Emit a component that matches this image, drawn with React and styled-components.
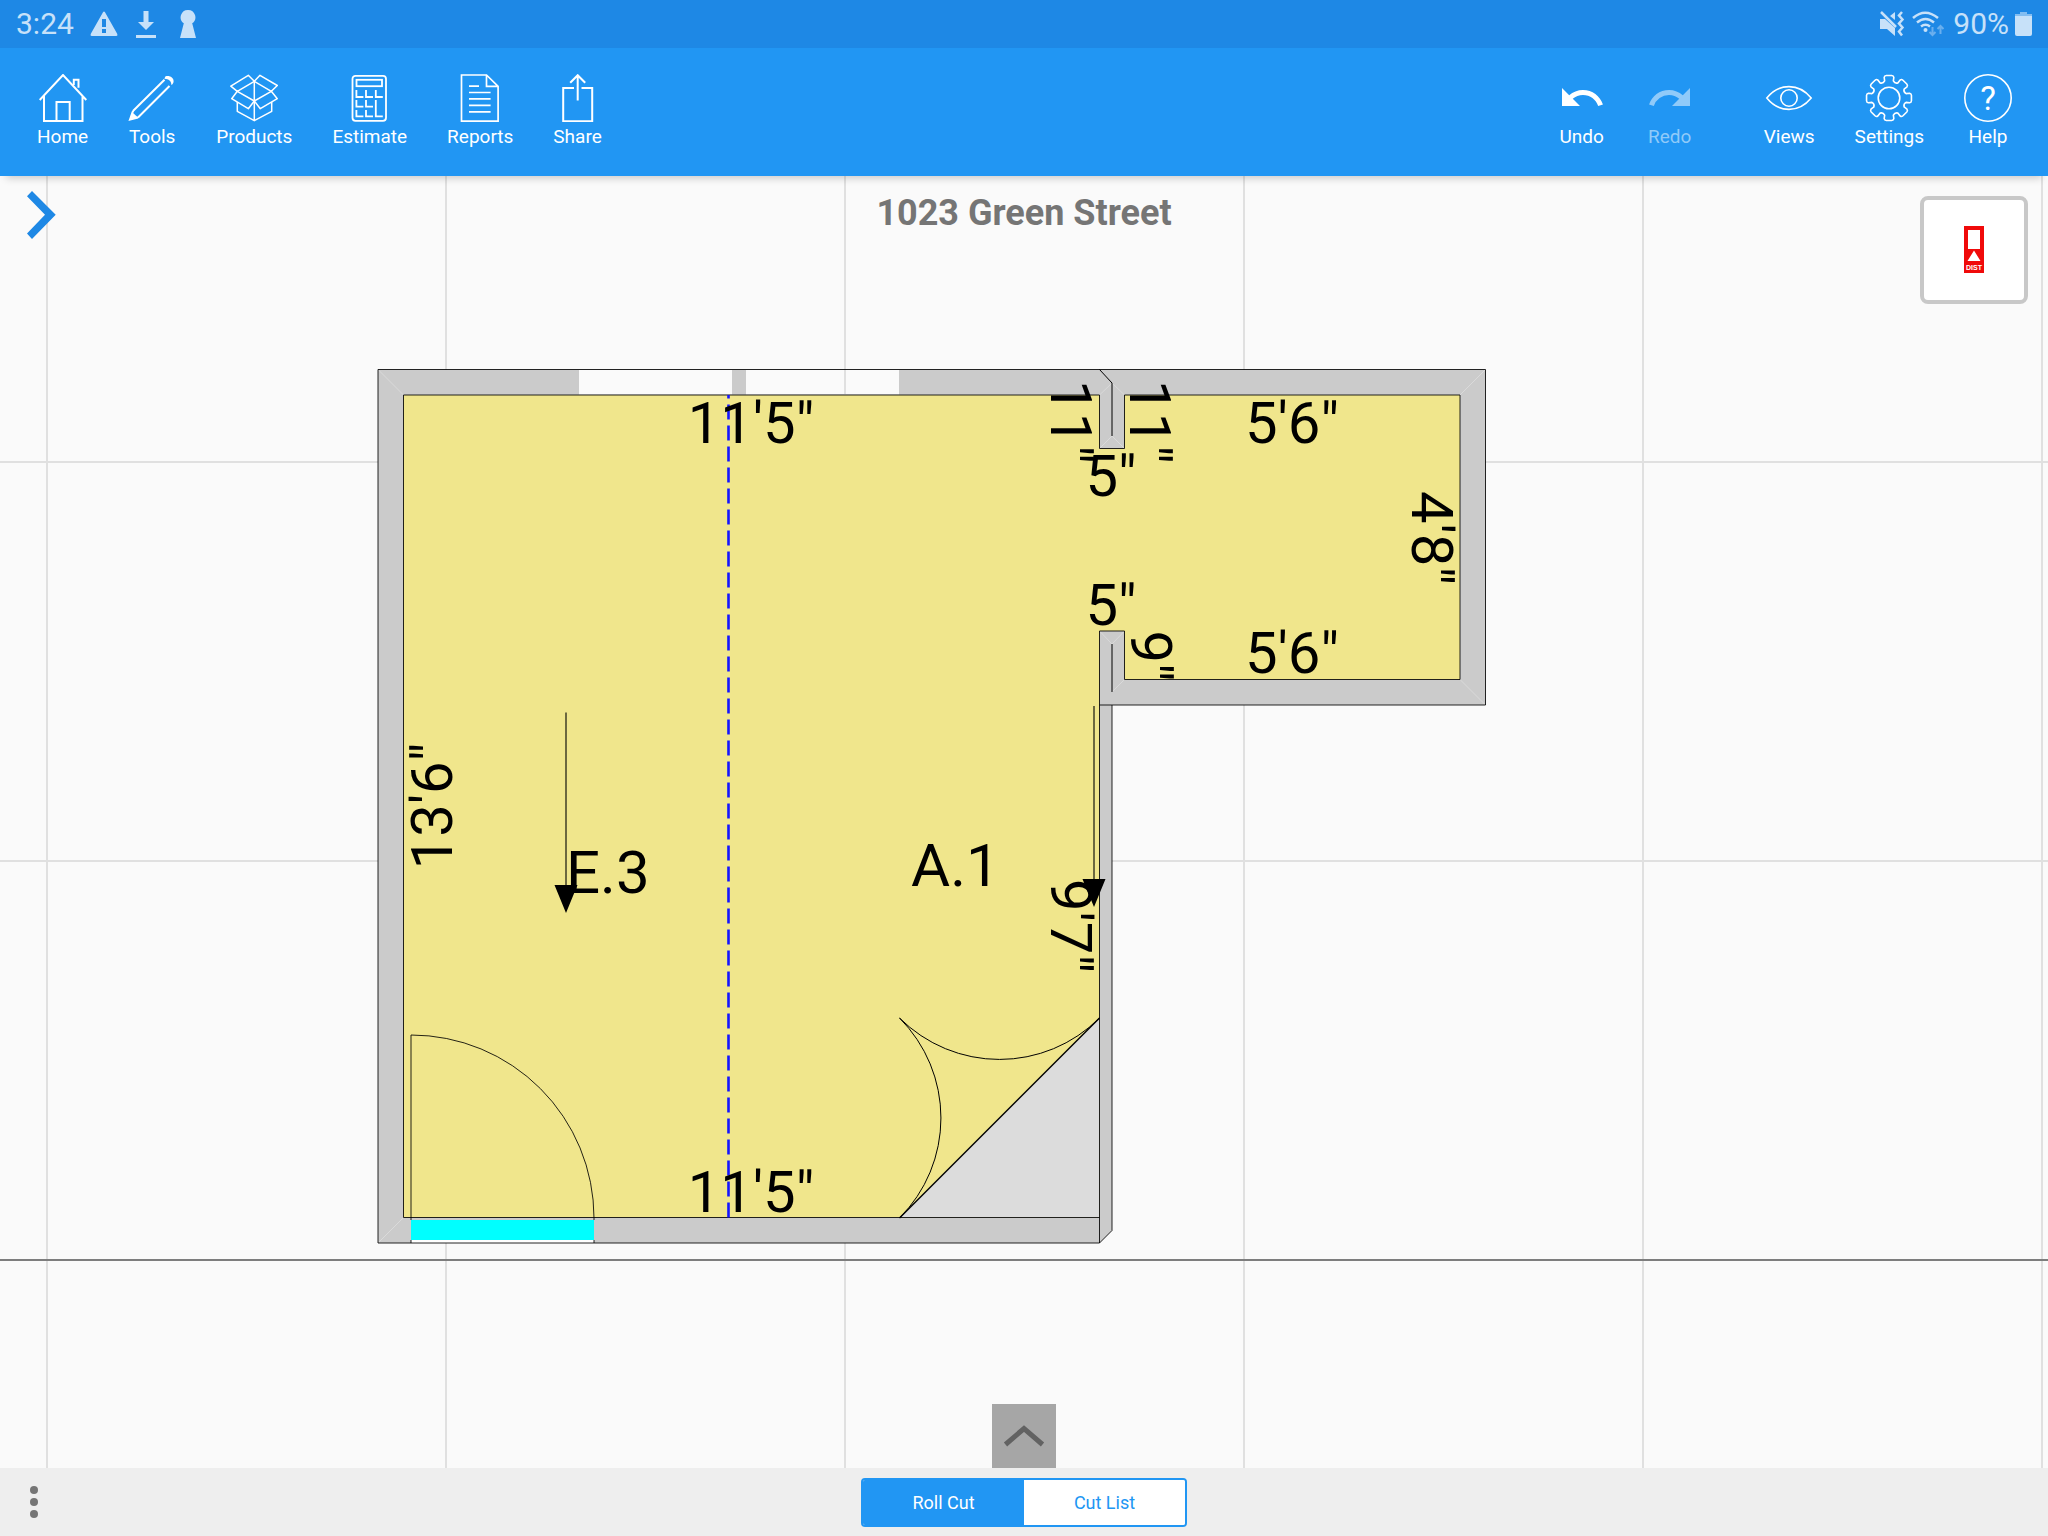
import React, { useState } from 'react'
import styled, { createGlobalStyle } from 'styled-components'
import { MdUndo, MdRedo } from 'react-icons/md'

const GlobalStyle = createGlobalStyle`
    * {
        box-sizing: border-box;
    }

    body {
        margin: 0;
        font-family: Roboto, "Liberation Sans", sans-serif;
        background: #fafafa;
    }

    button {
        margin: 0;
        padding: 0;
        border: 0;
        background: none;
        color: inherit;
        font: inherit;
        cursor: pointer;
    }

    svg {
        display: block;
    }
`

const Page = styled.div`
    display: flex;
    flex-direction: column;
    min-height: 100vh;
`

/* status bar */

const StatusBar = styled.div`
    display: flex;
    justify-content: space-between;
    align-items: center;
    height: 48px;
    padding: 0 16px;
    background: #1e88e5;
    color: #c7e1f9;
    font-size: 30px;
    line-height: 48px;
`

const StatusGroup = styled.div`
    display: flex;
    align-items: center;
    gap: ${props => props.$gap}px;
`

/* toolbar */

const Toolbar = styled.header`
    position: relative;
    z-index: 1;
    display: flex;
    justify-content: space-between;
    height: 128px;
    padding: 26px 16px 0 17px;
    background: #2196f3;
    color: #fff;
    box-shadow: 0 8px 8px -6px rgba(0, 0, 0, 0.2);
`

const ToolGroup = styled.nav`
    display: flex;
    align-items: flex-start;
`

const ToolGap = styled.div`
    width: 30px;
`

const ToolButton = styled.button`
    display: flex;
    flex-direction: column;
    align-items: center;
    gap: 3px;
    padding: 0 20px;
    font-size: 19px;
    line-height: 24px;

    &:disabled {
        color: #90caf9;
        cursor: default;
    }
`

const Icon = styled.svg`
    width: 48px;
    height: 48px;
    fill: none;
    stroke: currentColor;
    stroke-width: ${props => props.$weight || 2};
`

/* drawing area */

const Workspace = styled.main`
    position: relative;
    flex: 1;
    display: flex;
    flex-direction: column;
    align-items: center;
    justify-content: space-between;
`

const Plan = styled.svg`
    position: absolute;
    top: 0;
    left: 0;
    width: 100%;
    height: 100%;
`

const WorkspaceTop = styled.div`
    position: relative;
    width: 100%;
    display: grid;
    grid-template-columns: 1fr auto 1fr;
    align-items: start;
    padding: 15px 20px 0;
`

const PanelToggle = styled.button`
    justify-self: start;
    padding: 0 7px;
`

const Title = styled.h1`
    margin: 0;
    color: #757575;
    font-size: 36px;
    font-weight: 700;
    line-height: 44px;
`

const DeviceButton = styled.button`
    justify-self: end;
    display: flex;
    align-items: center;
    justify-content: center;
    width: 108px;
    height: 108px;
    margin-top: 5px;
    background: #fff;
    border: 4px solid #c8c8c8;
    border-radius: 8px;
`

const DrawerButton = styled.button`
    position: relative;
    width: 64px;
    height: 64px;
    background: #a6a6a6;
`

/* bottom bar */

const BottomBar = styled.footer`
    display: grid;
    grid-template-columns: 1fr auto 1fr;
    align-items: center;
    height: 68px;
    padding: 0 24px;
    background: #eee;
`

const MoreButton = styled.button`
    justify-self: start;
    width: 20px;
`

const Segments = styled.div`
    display: flex;
    border: 2px solid #2196f3;
    border-radius: 4px;
    overflow: hidden;
`

const Segment = styled.button`
    width: 161px;
    height: 45px;
    font-size: 18px;
    background: ${props => (props.$active ? '#2196f3' : '#fff')};
    color: ${props => (props.$active ? '#fff' : '#2196f3')};
`

const PlanText = styled.text`
    font-family: Roboto, "Liberation Sans", sans-serif;
    font-size: ${props => props.$size || 60}px;
    fill: #000;
`

// eight teeth around a 48px box
const gearPath = () => {
    const pt = (r, a) => `${(24 + r * Math.sin(a)).toFixed(2)} ${(24 - r * Math.cos(a)).toFixed(2)}`
    let d = ''
    for (let i = 0; i < 8; i++) {
        const a = (i * Math.PI) / 4
        const next = a + Math.PI / 4
        d += `${i ? 'L' : 'M'}${pt(17.6, a - 0.25)}`
        d += `L${pt(21.2, a - 0.23)}Q${pt(22.8, a - 0.2)} ${pt(22.6, a - 0.12)}`
        d += `L${pt(22.6, a + 0.12)}Q${pt(22.8, a + 0.2)} ${pt(21.2, a + 0.23)}`
        d += `L${pt(17.6, a + 0.25)}Q${pt(15.4, a + 0.39)} ${pt(17.6, next - 0.25)}`
    }
    return d + 'Z'
}

const HomeIcon = () => (
    <Icon viewBox="0 0 48 48">
        <path d="M.7 26 24 1l23.3 25M5 21.5V47h38.5V21.5" />
        <path d="M17.5 47V28h13.2v19" />
        <path d="M34.8 11V5.7h4.7v8" />
    </Icon>
)

const ToolsIcon = () => (
    <Icon viewBox="0 0 48 48">
        <path d="M5 37 36.5 5.8M10 43.5 41.5 12M5 37l-3 8.5L10 43.5" />
        <path d="m4 38 6 5.5L1.5 46z" fill="currentColor" stroke="none" />
        <path d="M37.3 2.6C41 1 45.6 3.4 45.6 7.2c0 2-1 3-2.2 3.8-.2-4-2.4-5.8-7-6.2z" fill="currentColor" stroke="none" />
    </Icon>
)

const ProductsIcon = () => (
    <Icon viewBox="0 0 48 48" $weight={1.5} strokeLinejoin="round">
        <path d="M24.3 7.3 18.3 1.3.8 12.1l6.5 5.2zM24.3 7.3 30 1.3l17.3 10.2-6 5.8z" />
        <path d="M7.3 17.3l-5.6 7.4 16.6 10 6-7.7zM41.3 17.3l6 7.4-17 10-6-7.7z" />
        <path d="M7.3 28v9.3l17 9.4 17.4-9.4V28M24.3 7.3v39.4" />
    </Icon>
)

const EstimateIcon = () => (
    <Icon viewBox="0 0 48 48" $weight={1.8}>
        <rect x="6.5" y="1.8" width="33.5" height="45" rx="3" />
        <rect x="10.5" y="5.8" width="25.5" height="6.4" />
        <path d="M10.4 16v7h7M20 16v7h7M29.8 16v7h7M10.4 26v6.6h7M20 26v6.6h7M10.4 36v6.4h7M20 36v6.4h7M29.8 26v16.4h7" />
    </Icon>
)

const ReportsIcon = () => (
    <Icon viewBox="0 0 48 48" $weight={1.7}>
        <path d="M5.5 1h25l11.6 11.4V47.2H5.5zM30.5 1v11.4h11.6" />
        <path d="M13 12.2h10M13 18.5h21.6M13 24.9h21.6M13 31.3h21.6M13 37.8h21.6" />
    </Icon>
)

const ShareIcon = () => (
    <Icon viewBox="0 0 48 48">
        <path d="M20 14H9.2v33.2h29V14H27.5M23.7 26.5V1.5M16.2 8.8l7.5-7.6 7.5 7.6" />
    </Icon>
)

const ViewsIcon = () => (
    <Icon viewBox="0 0 48 48" $weight={1.6}>
        <path d="M1.8 24C8 16.4 15.8 12.6 24 12.6S40 16.4 46.2 24C40 31.6 32.2 35.4 24 35.4S8 31.6 1.8 24z" />
        <circle cx="24" cy="24" r="8.2" />
    </Icon>
)

const SettingsIcon = () => (
    <Icon viewBox="0 0 48 48" $weight={1.6} strokeLinejoin="round">
        <path d={gearPath()} />
        <circle cx="24" cy="24" r="10.8" />
    </Icon>
)

const HelpIcon = () => (
    <Icon viewBox="0 0 48 48" $weight={1.6}>
        <circle cx="24" cy="24" r="23.2" />
        <text x="24" y="36" fontSize="33" textAnchor="middle" fill="currentColor" stroke="none">?</text>
    </Icon>
)

const leftTools = [
    ['Home', HomeIcon],
    ['Tools', ToolsIcon],
    ['Products', ProductsIcon],
    ['Estimate', EstimateIcon],
    ['Reports', ReportsIcon],
    ['Share', ShareIcon],
]

const rightTools = [
    ['Views', ViewsIcon],
    ['Settings', SettingsIcon],
    ['Help', HelpIcon],
]

const gridX = [47, 446, 845, 1244, 1643, 2042]
const gridY = [462, 861]

// x, y is the middle of the baseline
const dimensions = [
    { text: '11\'5"', x: 751, y: 443 },
    { text: '11\'5"', x: 751, y: 1212 },
    { text: '13\'6"', x: 452, y: 806, turn: -90 },
    { text: '11"', x: 1051, y: 422, turn: 90 },
    { text: '11"', x: 1130, y: 422, turn: 90 },
    { text: '5"', x: 1111, y: 496 },
    { text: '5"', x: 1111, y: 625 },
    { text: '5\'6"', x: 1292, y: 443 },
    { text: '5\'6"', x: 1292, y: 673 },
    { text: '4\'8"', x: 1412, y: 538, turn: 90 },
    { text: '9"', x: 1131, y: 656, turn: 90 },
    { text: '9\'7"', x: 1051, y: 926, turn: 90 },
]

function FloorPlan() {
    return (
        <Plan viewBox="0 176 2048 1292" preserveAspectRatio="xMidYMid slice">
            <g stroke="#e0e0e0" strokeWidth="2">
                {gridX.map(x => <line key={x} x1={x} x2={x} y1="176" y2="1468" />)}
                {gridY.map(y => <line key={y} x1="0" x2="2048" y1={y} y2={y} />)}
            </g>
            <line x1="0" x2="2048" y1="1260" y2="1260" stroke="#7d7d7d" strokeWidth="2" />

            {/* walls */}
            <path fill="#cbcbcb" d="M378 369.5H1485.5V705H1112V1230.5L1099.5 1243H378z" />
            {/* carpet */}
            <path
                fill="#f0e68c"
                d="M403.5 395H1099.5V448.5H1124.5V395H1460V679.5H1124.5V631H1099.5V1217.5H403.5z"
            />
            {/* windows */}
            <path fill="#fafafa" d="M579 370h153v24.5H579zM746 370h153v24.5H746z" />
            <path stroke="#e0e0e0" strokeWidth="2" d="M845 370v24" />
            {/* mitres */}
            <path
                fill="none"
                stroke="#dadada"
                d="M378 369.5 403.5 395M1460 395l25.5-25.5M1460 679.5l25.5 25.5M378 1243l25.5-25.5M1099.5 395l12.5-12M1124.5 395l-12.5-12M1099.5 448.5l12.5-12.5 12.5 12.5M1099.5 631l12.5 13 12.5-13M1112 692l12.5-12.5"
            />

            {/* corner fixture */}
            <path fill="#dcdcdc" d="M1099.5 1018V1217.5H899.5z" />

            {/* door */}
            <path fill="#fff" d="M411 1220h183v23H411z" />
            <path fill="#0ff" d="M411 1220h183v20H411z" />

            <g fill="none" stroke="#000">
                <path strokeOpacity=".85" d="M378 369.5H1485.5V705H1099.5M1112 705V1230.5L1099.5 1243H378V369.5" />
                <path strokeOpacity=".85" d="M403.5 395H1099.5V448.5H1124.5V395H1460V679.5H1124.5V631H1099.5V1243M403.5 395V1217.5H1099.5" />
                <path d="M1099.5 369.5 1112 383V436M1112 644v48" />
                <path strokeOpacity=".85" d="M411 1220V1035A183 183 0 0 1 594 1218v2M411 1240v3M594 1240v3" />
                <path d="M1099.5 1018 899.5 1218" strokeWidth="1.5" />
                <path d="M899.5 1018A141.4 141.4 0 0 0 1099.5 1018M899.5 1018A141.4 141.4 0 0 1 899.5 1218" />
                <path strokeWidth="2" strokeOpacity=".55" d="M566 712.5V890M1094 706V885" />
            </g>
            <path d="M554.5 885h23L566 913zM1082.5 879h23L1094 907z" />
            <path d="M728.5 1217.5V395" stroke="#1414ff" strokeWidth="2.6" strokeDasharray="15 6" />

            {dimensions.map(({ text, x, y, turn }) => (
                <PlanText
                    key={`${x}-${y}`}
                    $size={58}
                    textAnchor="middle"
                    transform={`translate(${x} ${y})${turn ? ` rotate(${turn})` : ''}`}
                >
                    {text}
                </PlanText>
            ))}
            <PlanText x="566" y="893">E.3</PlanText>
            <PlanText x="911" y="886">A.1</PlanText>
        </Plan>
    )
}

function App() {
    const [tab, setTab] = useState('Roll Cut')

    return (
        <>
            <GlobalStyle />
            <Page>
                <StatusBar>
                    <StatusGroup $gap={16}>
                        <span>3:24</span>
                        <svg width="28" height="28" viewBox="0 0 28 28">
                            <path fill="currentColor" fillRule="evenodd" d="M13 2.3q1-1.6 2 0L27.3 24q.7 2-1 2H1.7q-1.7 0-1-2zM12 9v8h4V9zM12 19v4h4v-4z" />
                        </svg>
                        <svg width="24" height="28" viewBox="0 0 24 28">
                            <path fill="currentColor" d="M9.5 1h5v11H20l-8 8-8-8h5.5zM2 25h20v3H2z" />
                        </svg>
                        <svg width="28" height="28" viewBox="2 0 28 28">
                            <path fill="currentColor" d="M16 0a7.3 7.3 0 0 1 4.2 13.3L24 28H8l3.8-14.7A7.3 7.3 0 0 1 16 0z" />
                        </svg>
                    </StatusGroup>
                    <StatusGroup $gap={6}>
                        <svg width="26" height="26" viewBox="0 0 26 26">
                            <path fill="currentColor" d="M0 8h5l10 9v8l-8-7H0zM15 1v8l-5-4z" />
                            <path fill="none" stroke="currentColor" strokeWidth="2.5" d="m1 1 15 15M22 1l-3 3.5 3.5 4-3.5 4 3.5 4-3.5 4 3 4" />
                        </svg>
                        <svg width="35" height="26" viewBox="0 0 35 26">
                            <path fill="none" stroke="currentColor" strokeWidth="2.5" d="M1 7q12-10.5 25 0M5 11.5q8.5-7 17 0M9 15.5q4.5-3.5 9 0" />
                            <circle cx="13.5" cy="19" r="2" fill="currentColor" />
                            <path fill="none" stroke="currentColor" strokeWidth="2" opacity=".45" d="M20.5 16v8M17.5 21l3 3 3-3M28.5 23v-8M25.5 18l3-3 3 3" />
                        </svg>
                        <span>90%</span>
                        <svg width="17" height="24" viewBox="0 0 17 24">
                            <path fill="currentColor" opacity=".6" d="M5 0h7v2h5v3H0V2h5z" />
                            <path fill="currentColor" d="M0 4h17v18q0 2-2 2H2q-2 0-2-2z" />
                        </svg>
                    </StatusGroup>
                </StatusBar>

                <Toolbar>
                    <ToolGroup>
                        {leftTools.map(([label, Glyph]) => (
                            <ToolButton key={label}>
                                <Glyph />
                                {label}
                            </ToolButton>
                        ))}
                    </ToolGroup>
                    <ToolGroup>
                        <ToolButton>
                            <MdUndo size={48} />
                            Undo
                        </ToolButton>
                        <ToolButton disabled>
                            <MdRedo size={48} />
                            Redo
                        </ToolButton>
                        <ToolGap />
                        {rightTools.map(([label, Glyph]) => (
                            <ToolButton key={label}>
                                <Glyph />
                                {label}
                            </ToolButton>
                        ))}
                    </ToolGroup>
                </Toolbar>

                <Workspace>
                    <FloorPlan />
                    <WorkspaceTop>
                        <PanelToggle aria-label="Open panel">
                            <svg width="29" height="48" viewBox="0 0 29 48">
                                <path fill="#1e88e5" d="M5 0l23.7 23.8L5 48 0 42.5 18 23.8 0 5.2z" />
                            </svg>
                        </PanelToggle>
                        <Title>1023 Green Street</Title>
                        <DeviceButton aria-label="Laser device">
                            <svg width="20" height="48" viewBox="0 0 20 48">
                                <path fill="#f00a0a" d="M0 0h20v47H0z" />
                                <path fill="#fff" d="M4 4h12v19H4zM10 24.5 16.5 35h-13z" />
                                <text x="10" y="43.5" fontSize="7" fontWeight="700" fontFamily="Liberation Sans" textAnchor="middle" fill="#fff">DIST</text>
                            </svg>
                        </DeviceButton>
                    </WorkspaceTop>
                    <DrawerButton aria-label="Open drawer">
                        <svg width="64" height="64" viewBox="0 0 64 64">
                            <path fill="none" stroke="#626262" strokeWidth="5" d="m13.5 40.5 18.5-16 18.5 16" />
                        </svg>
                    </DrawerButton>
                </Workspace>

                <BottomBar>
                    <MoreButton aria-label="More">
                        <svg width="20" height="32" viewBox="0 0 20 32" fill="#757575">
                            <circle cx="10" cy="4" r="4" />
                            <circle cx="10" cy="16" r="4" />
                            <circle cx="10" cy="28" r="4" />
                        </svg>
                    </MoreButton>
                    <Segments>
                        {['Roll Cut', 'Cut List'].map(name => (
                            <Segment
                                key={name}
                                $active={tab === name}
                                aria-pressed={tab === name}
                                onClick={() => setTab(name)}
                            >
                                {name}
                            </Segment>
                        ))}
                    </Segments>
                </BottomBar>
            </Page>
        </>
    )
}

export default App
